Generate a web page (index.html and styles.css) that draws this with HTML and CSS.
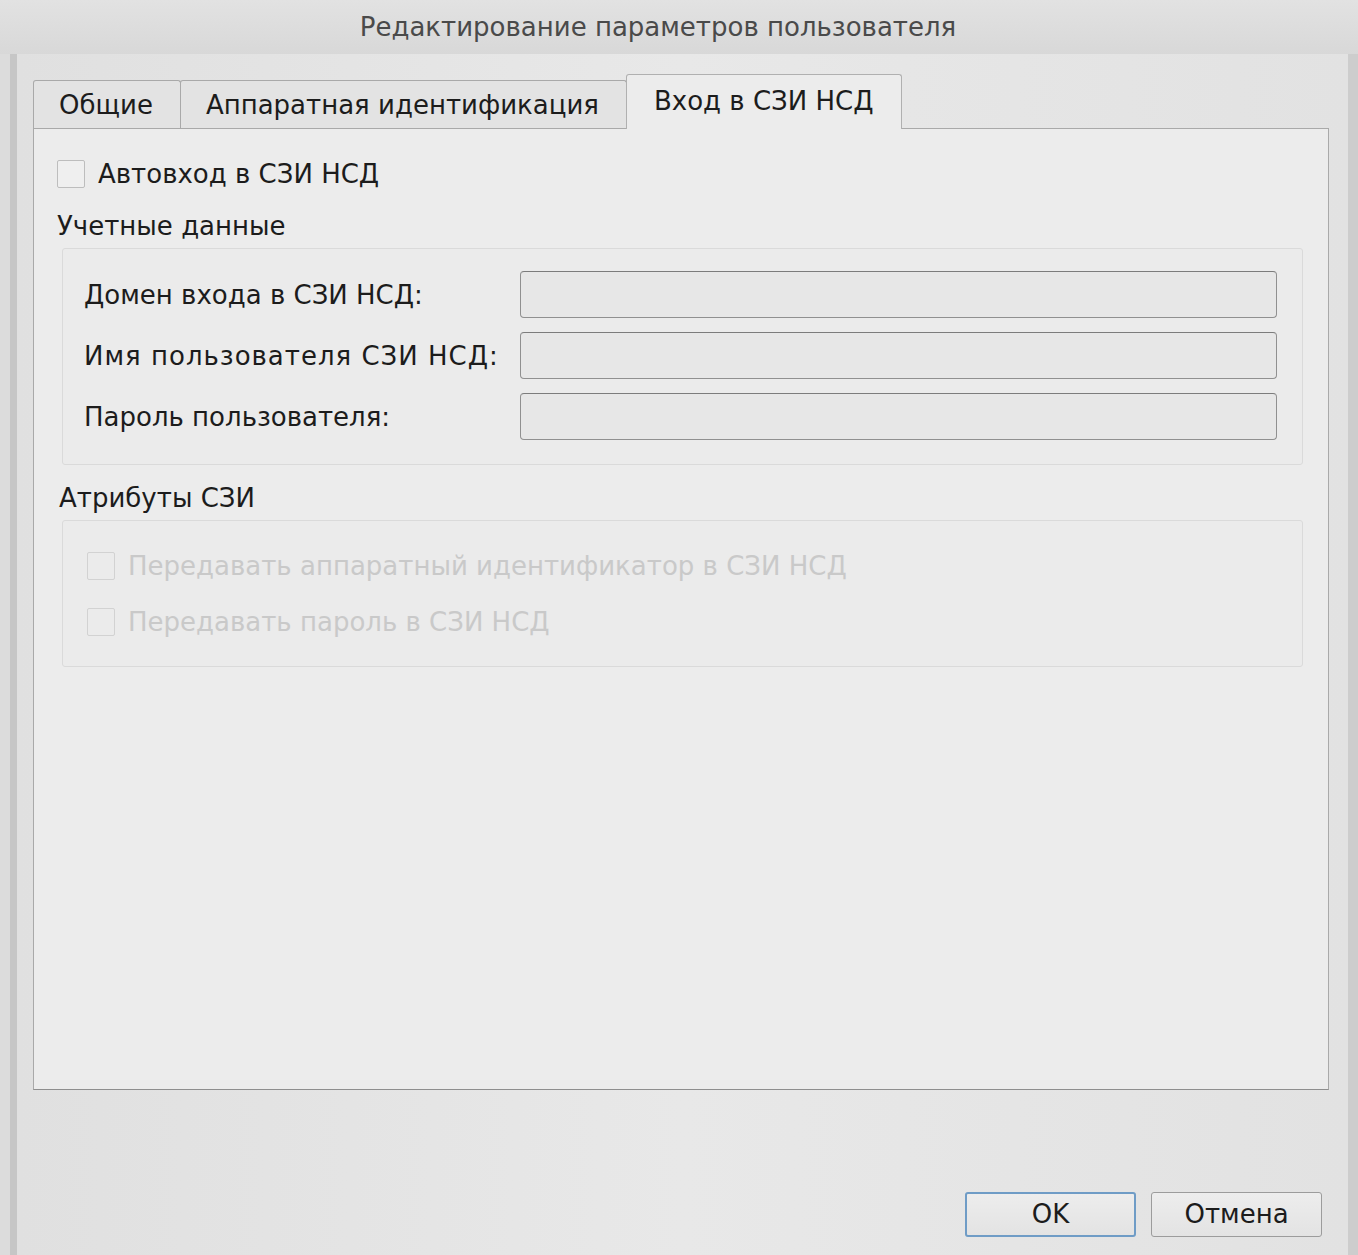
FILE: index.html
```html
<!DOCTYPE html>
<html lang="ru">
<head>
<meta charset="utf-8">
<title>Редактирование параметров пользователя</title>
<link rel="stylesheet" href="styles.css">
</head>
<body>
<div class="titlebar">Редактирование параметров пользователя</div>
<div class="window">
  <div class="tabbar">
    <div class="tab">Общие</div>
    <div class="tab">Аппаратная идентификация</div>
    <div class="tab tab-active">Вход в СЗИ НСД</div>
  </div>
  <div class="pane">
    <label class="check-row">
      <span class="checkbox"></span>
      <span class="check-text">Автовход в СЗИ НСД</span>
    </label>
    <div class="group-title">Учетные данные</div>
    <div class="groupbox form-grid">
      <div class="form-label">Домен входа в СЗИ НСД:</div>
      <div class="input"></div>
      <div class="form-label form-label-wide">Имя пользователя СЗИ НСД:</div>
      <div class="input"></div>
      <div class="form-label">Пароль пользователя:</div>
      <div class="input"></div>
    </div>
    <div class="group-title group-title-2">Атрибуты СЗИ</div>
    <div class="groupbox checks">
      <label class="check-row disabled">
        <span class="checkbox"></span>
        <span class="check-text">Передавать аппаратный идентификатор в СЗИ НСД</span>
      </label>
      <label class="check-row disabled">
        <span class="checkbox"></span>
        <span class="check-text">Передавать пароль в СЗИ НСД</span>
      </label>
    </div>
  </div>
  <div class="buttons">
    <div class="btn btn-default">OK</div>
    <div class="btn">Отмена</div>
  </div>
</div>
</body>
</html>
```
FILE: styles.css
```css
* { box-sizing: border-box; }
html, body { margin: 0; padding: 0; }
body {
  width: 1358px;
  height: 1255px;
  overflow: hidden;
  background: #dcdcdc;
  font-family: "DejaVu Sans", "Liberation Sans", sans-serif;
  font-size: 26px;
  color: #1c1c1c;
}
.titlebar {
  height: 54px;
  line-height: 54px;
  text-align: center;
  color: #4a4a4a;
  background: linear-gradient(#e2e2e2, #d8d8d8);
  padding-right: 42px;
}
.window {
  margin-left: 10px;
  width: 1348px;
  height: 1201px;
  background: linear-gradient(90deg, #e0e0e0, #e8e8e8 50%, #e2e2e2);
  border-left: 7px solid #c6c6c6;
  border-right: 10px solid #cdcdcd;
  padding: 20px 19px 0 16px;
}
.tabbar {
  display: flex;
  align-items: flex-end;
  height: 54px;
}
.tab {
  height: 48px;
  line-height: 48px;
  padding: 0 27px 0 25px;
  background: #e3e3e3;
  border: 1px solid #a9a9a9;
  border-bottom: none;
  border-radius: 3px 3px 0 0;
  margin-right: -1px;
  position: relative;
}
.tab-active {
  height: 55px;
  line-height: 52px;
  background: #ececec;
  margin-bottom: -1px;
  z-index: 1;
  border-color: #b0b0b0;
  padding: 0 28px 0 27px;
}
.pane {
  height: 962px;
  background: #ececec;
  border: 1px solid #a9a9a9;
  border-bottom-color: #8e8e8e;
  padding: 31px 25px 0 23px;
}
.check-row {
  display: flex;
  align-items: center;
  height: 28px;
}
.checkbox {
  width: 28px;
  height: 28px;
  border: 1px solid #bdbdbd;
  border-radius: 2px;
  background: #efefef;
  flex: none;
}
.check-text {
  margin-left: 13px;
  line-height: 28px;
  white-space: nowrap;
}
.group-title {
  margin-top: 23px;
  line-height: 30px;
}
.group-title-2 {
  margin-top: 18px;
  padding-left: 2px;
}
.groupbox {
  margin: 7px 0 0 5px;
  border: 1px solid #dadada;
  border-radius: 3px;
  background: #ebebeb;
}
.form-grid {
  height: 217px;
  display: grid;
  grid-template-columns: 436px 1fr;
  grid-auto-rows: 47px;
  row-gap: 14px;
  padding: 22px 25px 0 21px;
  align-items: center;
}
.form-label {
  white-space: nowrap;
}
.form-label-wide {
  letter-spacing: 1px;
}
.input {
  height: 47px;
  border: 1px solid #909090;
  border-top-color: #7c7c7c;
  border-radius: 4px;
  background: #e7e7e7;
}
.checks {
  height: 147px;
  padding: 31px 0 0 24px;
  display: flex;
  flex-direction: column;
  gap: 28px;
}
.disabled .checkbox {
  border-color: #d2d2d2;
  background: #ebebeb;
}
.disabled .check-text {
  color: #c9c9c9;
}
.buttons {
  display: flex;
  justify-content: flex-end;
  gap: 15px;
  margin-top: 102px;
  padding-right: 7px;
}
.btn {
  width: 171px;
  height: 45px;
  line-height: 43px;
  text-align: center;
  border: 1px solid #9c9c9c;
  border-radius: 3px;
  background: linear-gradient(#ededed, #e3e3e3);
}
.btn-default {
  border: 2px solid #6f9cc6;
  line-height: 41px;
}
```
